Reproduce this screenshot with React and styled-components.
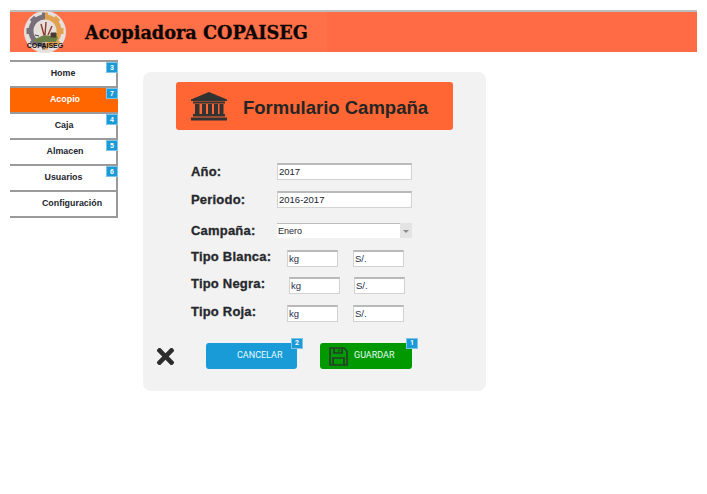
import React from "react";
import styled, { createGlobalStyle } from "styled-components";
import { FaTimes } from "react-icons/fa";

const Global = createGlobalStyle`
  html, body { margin: 0; padding: 0; background: #fff; }
  body { font-family: "Liberation Sans", Arial, sans-serif; }
`;

const Page = styled.div`
  width: 687px;
  padding: 10px 0 0 10px;
`;

const Header = styled.header`
  height: 40px;
  border-top: 2px solid #bdbdbd;
  background: #ff6b45;
  display: flex;
`;

const Brand = styled.div`
  width: 317px;
  display: flex;
  align-items: center;
  padding-left: 14px;
  box-sizing: border-box;
  background: #ff7049;
`;

const BrandName = styled.h1`
  margin: 0 0 0 19px;
  font-family: "DejaVu Serif", serif;
  font-size: 17.7px;
  font-weight: 700;
  color: #0c0705;
  -webkit-text-stroke: 0.3px #0c0705;
  white-space: nowrap;
`;

const Main = styled.div`
  display: flex;
  align-items: flex-start;
  margin-top: 8px;
`;

const Menu = styled.nav`
  width: 108px;
  flex: none;
  box-sizing: border-box;
  border-right: 2px solid #9a9a9a;
  border-bottom: 2px solid #9a9a9a;
`;

const MenuItem = styled.a`
  position: relative;
  display: block;
  height: 24px;
  line-height: 22px;
  border-top: 2px solid #9a9a9a;
  box-sizing: content-box;
  padding-left: ${(p) => p.$shift || 0}px;
  text-align: center;
  font-size: 8.9px;
  font-weight: 700;
  color: ${(p) => (p.$active ? "#fff" : "#23262e")};
  background: ${(p) => (p.$active ? "#ff6600" : "#fff")};
  margin-right: ${(p) => (p.$active ? "-2px" : "0")};
`;

const Badge = styled.span`
  position: absolute;
  top: ${(p) => p.$top || 0}px;
  right: ${(p) => p.$right || 0}px;
  width: 10px;
  height: 9px;
  line-height: 9px;
  border: 1px solid #7cc4ea;
  background: #1b9ad6;
  color: #fff;
  font-size: 7px;
  font-weight: 700;
  text-align: center;
`;

const Panel = styled.section`
  width: 343px;
  height: 319px;
  margin: 12px 0 0 25px;
  padding: 10px 33px 0;
  box-sizing: border-box;
  flex: none;
  border-radius: 8px;
  background: #f2f2f2;
`;

const Banner = styled.div`
  height: 48px;
  display: flex;
  align-items: center;
  padding-left: 15px;
  border-radius: 3px;
  background: #ff6633;
`;

const BannerTitle = styled.h2`
  margin: 3px 0 0 16px;
  font-size: 18.5px;
  font-weight: 700;
  color: #252525;
  white-space: nowrap;
`;

const Form = styled.form`
  padding: 33px 0 0 15px;
`;

const Row = styled.div`
  display: flex;
  align-items: flex-start;
  margin-top: ${(p) => p.$top || 0}px;
  height: 17px;
`;

const Label = styled.label`
  width: ${(p) => p.$width}px;
  flex: none;
  margin-top: ${(p) => p.$offset || 0}px;
  line-height: 17px;
  font-size: 13px;
  font-weight: 700;
  letter-spacing: 0.2px;
  color: #26282c;
  -webkit-text-stroke: 0.3px #26282c;
  white-space: nowrap;
`;

const Field = styled.input`
  width: ${(p) => p.$width}px;
  height: 17px;
  box-sizing: border-box;
  margin: 0 ${(p) => p.$gap || 0}px 0 0;
  padding: 0 1px 1px;
  border: 1px solid #d2d2d2;
  border-top: 2px solid #b9b9b9;
  border-radius: 0;
  outline: none;
  background: #fff;
  font-family: "Liberation Sans", Arial, sans-serif;
  font-size: 9.5px;
  color: #1c1c2c;
  &::placeholder {
    color: #25304a;
    opacity: 1;
  }
`;

const SelectBox = styled.div`
  position: relative;
  width: 135px;
  height: 15px;
  overflow: hidden;
`;

const Select = styled.select`
  display: block;
  width: 100%;
  height: 15px;
  box-sizing: border-box;
  appearance: none;
  margin: 0;
  padding: 0 0 0 1px;
  border: 0;
  border-top: 1px solid #bdbdbd;
  border-radius: 0;
  background: #fff;
  font-family: "Liberation Sans", Arial, sans-serif;
  font-size: 9px;
  line-height: 14px;
  color: #1c1c2c;
`;

const SelectArrow = styled.span`
  position: absolute;
  top: 0;
  right: 0;
  width: 12px;
  height: 15px;
  background: #e4e4e4;
  &::after {
    content: "";
    position: absolute;
    top: 7px;
    left: 3px;
    border: 3px solid transparent;
    border-top: 3px solid #8a8a8a;
  }
`;

const Actions = styled.div`
  display: flex;
  align-items: center;
  margin: 21px 0 0 -34px;
  height: 26px;
`;

const Close = styled.span`
  display: flex;
  width: 50px;
  flex: none;
  color: #2c2c2c;
  font-size: 25px;
  margin-left: -4px;
  margin-right: 3px;
`;

const Button = styled.button`
  position: relative;
  width: ${(p) => p.$width}px;
  height: 26px;
  margin: 0 ${(p) => p.$gap || 0}px 0 0;
  padding: 0 0 0 ${(p) => p.$pad}px;
  border: 0;
  border-radius: 3px;
  display: flex;
  align-items: center;
  background: ${(p) => p.$color};
  color: #e8fbff;
  font-family: Roboto, "Liberation Sans", sans-serif;
  font-size: 9px;
  text-align: left;
`;

const ButtonText = styled.span`
  margin: 0 0 2px ${(p) => p.$left || 0}px;
`;

const teeth = [0, 45, 90, 135, 180, 225, 270, 315];

const Logo = () => (
  <svg width="42" height="42" viewBox="0 0 42 42">
    <defs>
      <clipPath id="gear-left">
        <rect x="0" y="0" width="21" height="42" />
      </clipPath>
      <clipPath id="gear-right">
        <rect x="21" y="0" width="21" height="42" />
      </clipPath>
    </defs>
    <circle cx="21" cy="21" r="21" fill="#e6dfdb" />
    {[
      ["gear-left", "#77707a"],
      ["gear-right", "#e2a14f"],
    ].map(([clip, color]) => (
      <g key={clip} clipPath={`url(#${clip})`}>
        <circle cx="21" cy="20" r="14" fill="none" stroke={color} strokeWidth="5" />
        {teeth.map((a) => (
          <rect key={a} x="18" y="1.5" width="6" height="6" fill={color} transform={`rotate(${a} 21 20)`} />
        ))}
      </g>
    ))}
    <path d="M9 29l11-5 14 2-2 5H12z" fill="#6c7f45" />
    <path d="M17 13l3 11M22 11l-1 13M28 15l-4 9" stroke="#8c3b2c" strokeWidth="1.4" />
    <path d="M27 22h5v4h-5zM11 24l4 1" fill="#4a3a34" stroke="#4a3a34" />
    <text
      x="21"
      y="36.5"
      textAnchor="middle"
      fontFamily="Liberation Sans, sans-serif"
      fontSize="7"
      fontWeight="700"
      fill="#15131a"
    >
      COPAISEG
    </text>
  </svg>
);

const BankIcon = () => (
  <svg width="36" height="29" viewBox="0 0 36 29" fill="#333">
    <path d="M18 0L36 7.5V9H0V7.5z" />
    <rect x="2" y="9.5" width="32" height="2" />
    <rect x="4" y="12" width="4.5" height="10" />
    <rect x="11" y="12" width="4" height="10" />
    <rect x="17" y="12" width="4" height="10" />
    <rect x="23" y="12" width="4" height="10" />
    <rect x="28.5" y="12" width="4" height="10" />
    <rect x="2" y="22" width="32" height="2.5" />
    <rect x="0" y="25.5" width="36" height="3" />
  </svg>
);

const SaveIcon = () => (
  <svg width="19" height="19" viewBox="0 0 19 19" fill="none" stroke="#24402a" strokeWidth="1.7">
    <path d="M1 1h14l3 3v14H1z" />
    <path d="M5 1v5h8V1" />
    <path d="M4 18v-7h11v7" />
    <path d="M10 2.5v2" />
  </svg>
);

const menu = [
  { name: "Home", badge: 3, shift: 0 },
  { name: "Acopio", badge: 7, active: true, shift: 2 },
  { name: "Caja", badge: 4, shift: 2 },
  { name: "Almacen", badge: 5, shift: 4 },
  { name: "Usuarios", badge: 6, shift: 1 },
  { name: "Configuración", shift: 18 },
];

const tipos = [
  { name: "Tipo Blanca:", top: 10, label: 96, gap: 15 },
  { name: "Tipo Negra:", top: 10, label: 98, gap: 14 },
  { name: "Tipo Roja:", top: 11, label: 96, gap: 15 },
];

export default function App() {
  return (
    <Page>
      <Global />
      <Header>
        <Brand>
          <Logo />
          <BrandName>Acopiadora COPAISEG</BrandName>
        </Brand>
      </Header>
      <Main>
        <Menu>
          {menu.map((m) => (
            <MenuItem key={m.name} $active={m.active} $shift={m.shift}>
              {m.name}
              {m.badge && <Badge $top={0} $right={m.active ? 0 : -2}>{m.badge}</Badge>}
            </MenuItem>
          ))}
        </Menu>
        <Panel>
          <Banner>
            <BankIcon />
            <BannerTitle>Formulario Campaña</BannerTitle>
          </Banner>
          <Form>
            <Row>
              <Label $width={86}>Año:</Label>
              <Field $width={135} defaultValue="2017" />
            </Row>
            <Row $top={11}>
              <Label $width={86}>Periodo:</Label>
              <Field $width={135} defaultValue="2016-2017" />
            </Row>
            <Row $top={15}>
              <Label $width={86} $offset={-1}>Campaña:</Label>
              <SelectBox>
                <Select defaultValue="Enero">
                  <option>Enero</option>
                </Select>
                <SelectArrow />
              </SelectBox>
            </Row>
            {tipos.map((t) => (
              <Row key={t.name} $top={t.top}>
                <Label $width={t.label} $offset={-2}>{t.name}</Label>
                <Field $width={51} $gap={t.gap} placeholder="kg" />
                <Field $width={51} placeholder="S/." />
              </Row>
            ))}
            <Actions>
              <Close><FaTimes /></Close>
              <Button type="button" $width={91} $gap={23} $pad={31} $color="#189bd7">
                <ButtonText>CANCELAR</ButtonText>
                <Badge $top={-5} $right={-6}>2</Badge>
              </Button>
              <Button type="button" $width={92} $pad={9} $color="#009900">
                <SaveIcon />
                <ButtonText $left={6}>GUARDAR</ButtonText>
                <Badge $top={-5} $right={-6}>1</Badge>
              </Button>
            </Actions>
          </Form>
        </Panel>
      </Main>
    </Page>
  );
}
